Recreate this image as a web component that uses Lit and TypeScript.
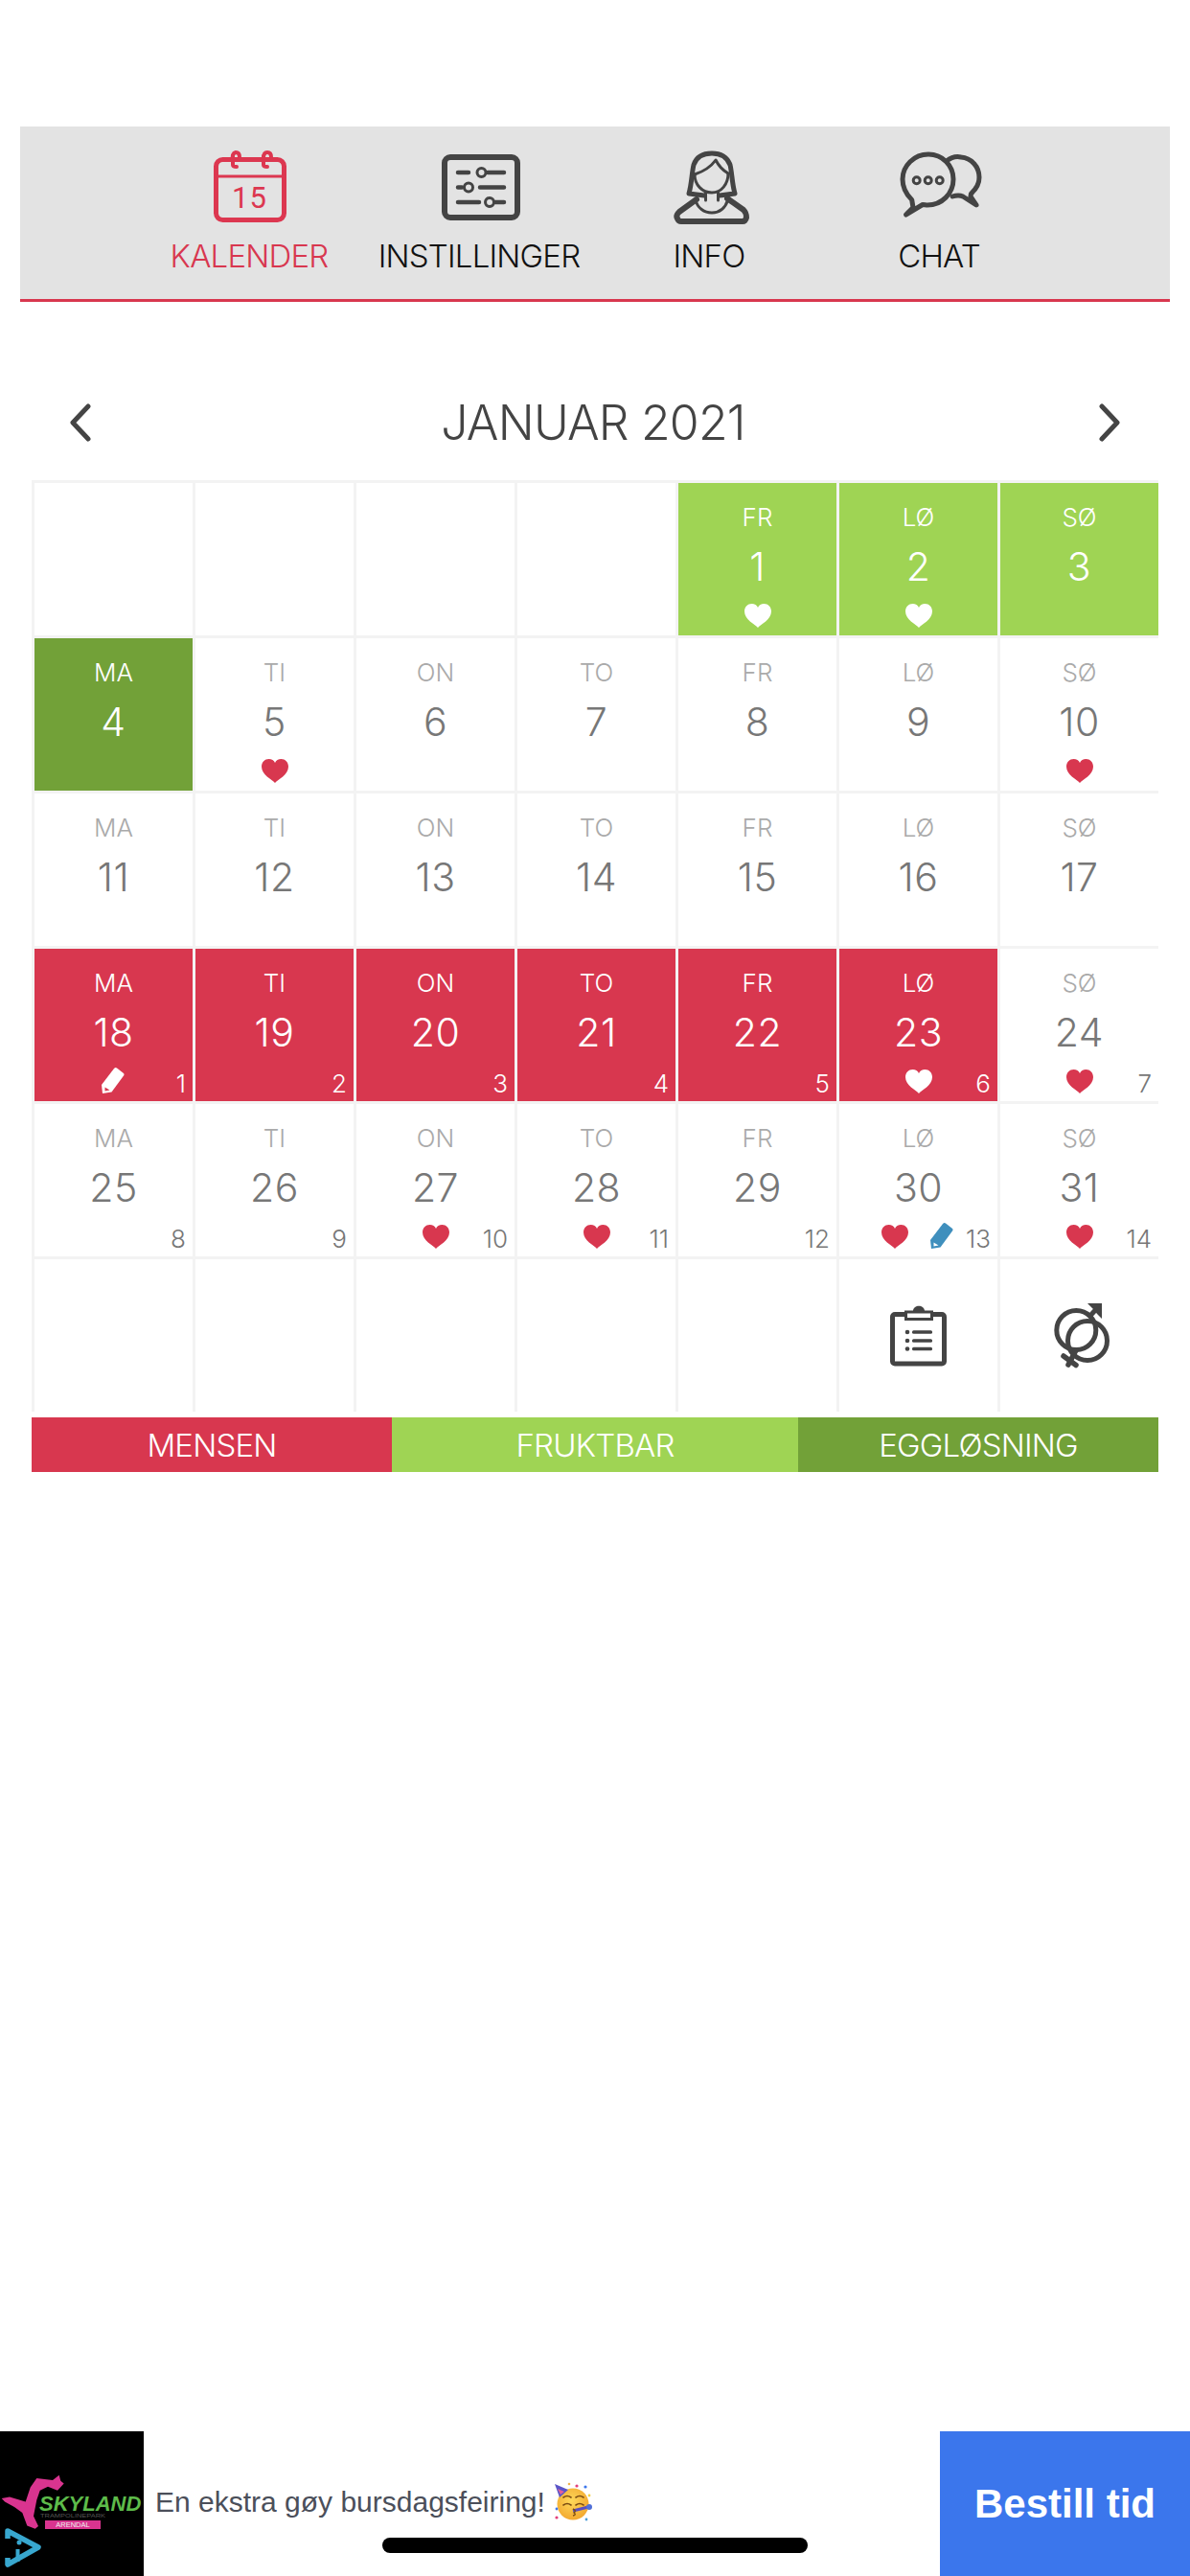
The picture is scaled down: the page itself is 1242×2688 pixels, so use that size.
import { LitElement, html, css, nothing } from "lit";
import { customElement } from "lit/decorators.js";

const RED = "#d8374f";
type Cell = { n?: number; k?: string; heart?: boolean; pen?: string; c?: number; icon?: string };
const W = ["MA", "TI", "ON", "TO", "FR", "LØ", "SØ"];

const heart = (color: string) => html`<svg class="heart" viewBox="0 0 28 25"><path fill=${color} d="M14 25 C11 21.500 0 16.500 0 8 C0 3 3.500 0 7.500 0 C10.500 0 13 1.500 14 4 C15 1.500 17.500 0 20.500 0 C24.500 0 28 3 28 8 C28 16.500 17 21.500 14 25Z"/></svg>`;
const pen = (color: string, bg: string) => html`<svg class="pen" viewBox="0 0 24 28"><path fill=${color} d="M16 0.500 L23 6 Q24 7 23 8.500 L10.500 25.500 L1 27 L0 18 L13 1 Q14.500 -0.500 16 0.500Z"/><path fill=${bg} d="M3.500 20.500 L8.500 23.500 L3.500 24.500Z"/></svg>`;

const clipboard = html`<svg class="big" viewBox="0 0 60 64"><rect x="2.500" y="9.500" width="54" height="51.500" rx="2.500" fill="none" stroke="#444" stroke-width="5"/><path fill="#444" d="M15 5.500H24 C24.500 -1 35.500 -1 36 5.500H45V16H15Z"/><rect x="18" y="8.500" width="24" height="4.500" fill="#fff"/><g fill="#444"><circle cx="18" cy="28" r="2.300"/><circle cx="18" cy="37" r="2.300"/><circle cx="18" cy="45.500" r="2.300"/><rect x="23" y="26.300" width="21" height="3.400" rx="1.500"/><rect x="23" y="35.300" width="21" height="3.400" rx="1.500"/><rect x="23" y="43.800" width="21" height="3.400" rx="1.500"/></g></svg>`;
const gender = html`<svg class="big" viewBox="0 0 58 67"><g fill="none" stroke="#444" stroke-width="5"><circle cx="23.300" cy="28" r="20.500"/><circle cx="35" cy="39" r="20.500"/><path d="M36 15 L46 4"/><g stroke-width="5.500" stroke-linecap="round"><path d="M23 49 L15 64"/><path d="M10 55 L23 64.500"/></g></g><path fill="#444" d="M35 0 H50 V16 L45 11 L41 6Z"/></svg>`;

const rows: Cell[][] = [
  [{}, {}, {}, {}, { n: 1, k: "fert", heart: true }, { n: 2, k: "fert", heart: true }, { n: 3, k: "fert" }],
  [{ n: 4, k: "ovul" }, { n: 5, heart: true }, { n: 6 }, { n: 7 }, { n: 8 }, { n: 9 }, { n: 10, heart: true }],
  [{ n: 11 }, { n: 12 }, { n: 13 }, { n: 14 }, { n: 15 }, { n: 16 }, { n: 17 }],
  [{ n: 18, k: "mens", pen: "#fff", c: 1 }, { n: 19, k: "mens", c: 2 }, { n: 20, k: "mens", c: 3 }, { n: 21, k: "mens", c: 4 }, { n: 22, k: "mens", c: 5 }, { n: 23, k: "mens", heart: true, c: 6 }, { n: 24, heart: true, c: 7 }],
  [{ n: 25, c: 8 }, { n: 26, c: 9 }, { n: 27, heart: true, c: 10 }, { n: 28, heart: true, c: 11 }, { n: 29, c: 12 }, { n: 30, heart: true, pen: "#3f8fbd", c: 13 }, { n: 31, heart: true, c: 14 }],
  [{}, {}, {}, {}, {}, { icon: "clip" }, { icon: "gender" }],
];

@customElement("app-root")
export class AppRoot extends LitElement {
  static styles = css`
    :host { display: block; width: 1242px; height: 2688px; background: #fff; position: relative; overflow: hidden;
      font-family: Inter, "Liberation Sans", sans-serif; font-weight: 300; }
    .page { display: flex; flex-direction: column; height: 2688px; padding-top: 132px; box-sizing: border-box; }
    nav { margin: 0 21px; height: 183px; box-sizing: border-box; background: #e3e3e3; border-bottom: 3px solid #d8374f;
      display: flex; padding-left: 119px; }
    .tab { width: 240px; display: flex; flex-direction: column; align-items: center; padding-top: 24px; color: #111; font-size: 33px; letter-spacing: -0.8px; }
    .tab svg { width: 90px; height: 90px; display: block; overflow: visible; }
    .tab span { margin-top: 2px; line-height: 38px; white-space: nowrap; }
    .tab.on { color: #d8374f; }
    .head { height: 186px; margin: 0 33px; display: flex; align-items: center; justify-content: space-between; padding: 66px 39px 0 39px; color: #444; font-size: 50px; letter-spacing: -0.8px; box-sizing: border-box; }
    .head svg { width: 24px; height: 40px; display: block; }
    .head span { margin-right: 4px; }
    .grid { margin-left: 33px; width: 1176px; display: grid; grid-template-columns: repeat(7, 165px); grid-auto-rows: 159px; gap: 3px; padding: 3px 0 0 3px; box-sizing: border-box; background: #f3f3f3; }
    .cell { background: #fff; position: relative; display: flex; flex-direction: column; align-items: center; color: #777; }
    .cell .wd { margin-top: 20px; font-size: 26px; line-height: 32px; color: #aaa; }
    .cell .num { margin-top: 11px; font-size: 41px; line-height: 48px; letter-spacing: 0.5px; color: #777; }
    .mens { background: #d8374f; } .fert { background: #9fd454; } .ovul { background: #72a138; }
    .mens .wd, .mens .num, .mens .c, .fert .wd, .fert .num, .ovul .wd, .ovul .num { color: #fff; }
    .heart { position: absolute; left: 69px; top: 126px; width: 28px; height: 25px; }
    .pen { position: absolute; left: 70px; top: 124px; width: 24px; height: 28px; }
    .both .heart { left: 44px; }
    .both .pen { left: 95px; }
    .c { position: absolute; right: 7px; top: 126px; font-size: 26px; line-height: 30px; color: #777; }
    .big { position: absolute; overflow: visible; }
    .clip .big { left: 53px; top: 48px; width: 60px; height: 64px; }
    .gen .big { left: 56px; top: 46px; width: 58px; height: 67px; }
    .legend { margin: 6px 0 0 33px; width: 1176px; height: 57px; display: grid; grid-template-columns: 376px 424px 376px; color: #fff; font-size: 33px; letter-spacing: -0.8px; }
    .legend div { display: flex; align-items: center; justify-content: center; }
    .ad { margin-top: auto; height: 151px; display: flex; align-items: stretch; position: relative; }
    .logo { width: 150px; height: 151px; background: #000; flex: none; display: block; }
    .logo text { font-family: "Liberation Sans", sans-serif; }
    .txt { flex: 1; padding-left: 12px; display: flex; align-items: center; gap: 10px; font-family: "Liberation Sans", sans-serif; font-weight: 400; font-size: 30px; color: #4b4f5a; padding-bottom: 4px; }
    .txt svg { width: 40px; height: 40px; display: block; overflow: visible; }
    .btn { width: 261px; flex: none; background: #3b76ec; color: #fff; font-family: "Liberation Sans", sans-serif; font-weight: 700; font-size: 42px; display: flex; align-items: center; justify-content: center; }
    .home { position: absolute; left: 399px; bottom: 24px; width: 444px; height: 16px; border-radius: 8px; background: #000; }
  `;

  private cell(c: Cell, col: number) {
    if (c.icon) return html`<div class="cell ${c.icon === "clip" ? "clip" : "gen"}">${c.icon === "clip" ? clipboard : gender}</div>`;
    if (!c.n) return html`<div class="cell"></div>`;
    const onColor = !!c.k;
    const both = c.heart && c.pen;
    return html`<div class="cell ${c.k ?? ""} ${both ? "both" : ""}">
      <div class="wd">${W[col]}</div>
      <div class="num">${c.n}</div>
      ${c.heart ? heart(onColor ? "#fff" : RED) : nothing}
      ${c.pen ? pen(c.pen, onColor ? RED : "#fff") : nothing}
      ${c.c ? html`<div class="c">${c.c}</div>` : nothing}
    </div>`;
  }

  render() {
    return html`<div class="page">
      <nav>
        <div class="tab on">
          <svg viewBox="0 0 90 90"><g fill="none" stroke="#dc3750">
            <rect x="10.500" y="10.500" width="71" height="63" rx="7" stroke-width="5"/>
            <path d="M8 28H84" stroke-width="3"/>
            <path d="M28 13 Q26.500 4 31 3 Q35 3 35 8" stroke-width="4" stroke-linecap="round"/>
            <path d="M28 7V16Q28 18 32 18" stroke-width="4" stroke-linecap="round"/>
            <path d="M60 7V16Q60 18 64 18" stroke-width="4" stroke-linecap="round"/>
            <path d="M60 9 Q60 3 64 3 Q68 3 68 8" stroke-width="4" stroke-linecap="round"/>
          </g><text x="45.500" y="61" text-anchor="middle" font-size="31" letter-spacing="1" fill="#dc3750" font-family="Roboto, sans-serif" font-weight="400">15</text></svg>
          <span>KALENDER</span>
        </div>
        <div class="tab">
          <svg viewBox="0 0 90 90"><rect x="9" y="8" width="76" height="63" rx="6" fill="none" stroke="#444" stroke-width="6"/>
            <g stroke="#444" stroke-width="4.500" stroke-linecap="round" fill="none"><path d="M23 24H34M54 24H71M23 39.500H27M46 39.500H71M23 55H45M62 55H71"/></g>
            <g fill="#e3e3e3" stroke="#444" stroke-width="3"><circle cx="47.500" cy="24" r="4.500"/><circle cx="34" cy="39.500" r="4.500"/><circle cx="56" cy="55" r="4.500"/></g></svg>
          <span>INSTILLINGER</span>
        </div>
        <div class="tab">
          <svg viewBox="0 0 90 90"><g fill="none" stroke="#444" stroke-linejoin="round" stroke-linecap="round">
            <path stroke-width="5" d="M40 48 L24 46 C27 36 27 24 29 16 C32 7 40 4 48 4 C57 4 64 8 67 16 C69 24 69 36 72 46 L56 48"/>
            <path stroke-width="3" d="M30 26 C39 23 47 18 52 11 C55 17 60 22 65 25"/>
            <path stroke-width="3" d="M30 26 C30 37 38 45 48 45 C58 45 65 36 65 25"/>
            <path stroke-width="6" d="M32 52 L14 65 Q10 69 12 72 Q13 75 16 75 H80 Q83 75 84 71 Q84 66 81 63 L64 51"/>
            <path stroke-width="3" d="M41.500 45 V53 M54.500 45 V53 M31 53 C33 61 40 66 48 66 C56 66 62 61 64.500 53"/></g></svg>
          <span>INFO</span>
        </div>
        <div class="tab">
          <svg viewBox="0 0 90 90"><g fill="none" stroke="#444" stroke-width="5" stroke-linejoin="round" stroke-linecap="round">
            <path d="M53 12 C58 8 64 7 68 8 C79 9 87 18 87 29 C87 36 83 42 78.500 46 L78 49 L84 58 L70 49 C66 47 62 48 59 49"/>
            <path d="M34 5 C49 5 60 17 60 31 C60 46 48 58 33 58 C31 58 30 57.500 28 57.500 L10.500 68 L18 60.500 L16.700 52.500 C11 47 7 40 7 31 C7 17 19 5 34 5Z"/></g>
            <g fill="none" stroke="#444" stroke-width="3"><circle cx="21.700" cy="32.300" r="3.500"/><circle cx="33.700" cy="32.300" r="3.500"/><circle cx="45.700" cy="32.300" r="3.500"/></g></svg>
          <span>CHAT</span>
        </div>
      </nav>
      <div class="head">
        <svg viewBox="0 0 24 40"><path d="M20 3 L4 20 L20 37" fill="none" stroke="#444" stroke-width="5" stroke-linecap="round" stroke-linejoin="round"/></svg>
        <span>JANUAR 2021</span>
        <svg viewBox="0 0 24 40"><path d="M4 3 L20 20 L4 37" fill="none" stroke="#444" stroke-width="5" stroke-linecap="round" stroke-linejoin="round"/></svg>
      </div>
      <div class="grid">
        ${rows.map((r) => r.map((c, i) => this.cell(c, i)))}
      </div>
      <div class="legend">
        <div class="mens">MENSEN</div><div class="fert">FRUKTBAR</div><div class="ovul">EGGLØSNING</div>
      </div>
      <div class="ad">
        <svg class="logo" viewBox="0 0 150 151">
          <path fill="#d9348f" d="M61.700 45.700 L55 51 L38.300 49 L31.700 58.400 L26.700 73.400 L10 68.400 L1.700 70 L5 73.400 L15 79 L23.300 85 L28.300 98.400 L36.700 101.700 L40 99 L35 88.400 L38.300 71.700 L41.700 61.700 L50 57.700 L60 61.700 L66.700 54.400 L63.300 51.700Z"/>
          <text x="41" y="83" font-size="22" font-weight="700" font-style="italic" fill="#5dbb4a">SKYLAND</text>
          <text x="42" y="90" font-size="4.500" fill="#555" textLength="68" lengthAdjust="spacingAndGlyphs">TRAMPOLINEPARK</text>
          <rect x="47" y="93" width="58" height="9" fill="#d9348f"/>
          <text x="76" y="100" font-size="7.500" fill="#eee" text-anchor="middle">ARENDAL</text>
          <g fill="none" stroke="#38a7cf" stroke-linejoin="round">
            <path d="M8 112 V104 L40 121 L8 139 V132" stroke-width="5.500"/>
            <path d="M18.500 123 V136" stroke-width="4"/>
          </g>
          <circle cx="20" cy="116" r="2.500" fill="#38a7cf"/>
        </svg>
        <div class="txt">En ekstra gøy bursdagsfeiring!
          <svg viewBox="0 0 40 40">
            <defs><radialGradient id="f" cx="0.450" cy="0.400" r="0.650"><stop offset="0" stop-color="#fdd85a"/><stop offset="1" stop-color="#f2a52c"/></radialGradient></defs>
            <circle cx="19" cy="22" r="16.500" fill="url(#f)"/>
            <path d="M0 1 L14 7 L5 15Z" fill="#5a55c8"/><path d="M3 6 L10 9 L6 12Z" fill="#e4609b"/>
            <path d="M9 15 Q13 12 17 15 M22 15 Q26 12 30 15 M9 23 Q13 20 17 23 M22 23 Q26 20 30 23" fill="none" stroke="#7a4c12" stroke-width="1.600" stroke-linecap="round"/>
            <path d="M19 29 L35 25" stroke="#5a4fc0" stroke-width="3"/>
            <circle cx="36" cy="25" r="3" fill="#4f6fd8"/>
            <path d="M19 27 Q23 29 20 31 Q23 33 19 34" fill="none" stroke="#7a4c12" stroke-width="1.400"/>
            <circle cx="32" cy="4" r="1.600" fill="#3b76ec"/><circle cx="23" cy="3" r="1.600" fill="#e4407b"/><circle cx="15" cy="1" r="1.300" fill="#f2b34c"/><circle cx="36" cy="13" r="1.400" fill="#f2d24c"/><circle cx="2" cy="27" r="1.400" fill="#3b76ec"/><circle cx="2" cy="36" r="1.600" fill="#e4407b"/><circle cx="33" cy="38" r="1.400" fill="#4f9fd8"/>
          </svg>
        </div>
        <div class="btn">Bestill tid</div>
        <div class="home"></div>
      </div>
    </div>`;
  }
}
